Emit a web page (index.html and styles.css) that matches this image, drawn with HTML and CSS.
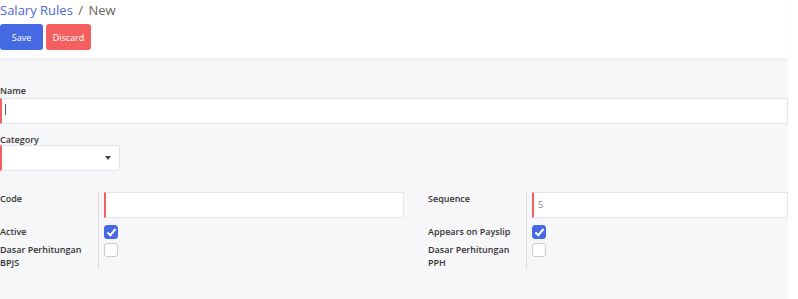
FILE: index.html
```html
<!DOCTYPE html>
<html lang="en">
<head>
    <meta charset="UTF-8">
    <title>Salary Rules / New</title>
    <link rel="stylesheet" href="styles.css">
</head>
<body>
    <div class="page">
        <!-- Header -->
        <div class="header">
            <div class="breadcrumb">
                <a class="crumb-link">Salary Rules</a>
                <span class="crumb-sep">/</span>
                <span class="crumb-current">New</span>
            </div>
            <div class="actions">
                <button class="btn btn-save">Save</button>
                <button class="btn btn-discard">Discard</button>
            </div>
        </div>

        <!-- Form -->
        <div class="sheet">
            <div class="field-block">
                <label class="top-label">Name</label>
                <div class="input required wide"><span class="caret"></span></div>
            </div>

            <div class="field-block">
                <label class="top-label">Category</label>
                <div class="input required select">
                    <span class="select-arrow"></span>
                </div>
            </div>

            <div class="groups">
                <div class="group group-left">
                    <div class="cell-label">Code</div>
                    <div class="cell-field"><div class="input required"></div></div>

                    <div class="cell-label short">Active</div>
                    <div class="cell-field"><span class="check checked"></span></div>

                    <div class="cell-label last">Dasar Perhitungan BPJS</div>
                    <div class="cell-field last"><span class="check"></span></div>
                </div>

                <div class="group group-right">
                    <div class="cell-label">Sequence</div>
                    <div class="cell-field"><div class="input required value">5</div></div>

                    <div class="cell-label short">Appears on Payslip</div>
                    <div class="cell-field"><span class="check checked"></span></div>

                    <div class="cell-label last">Dasar Perhitungan PPH</div>
                    <div class="cell-field last"><span class="check"></span></div>
                </div>
            </div>
        </div>
    </div>
</body>
</html>
```

FILE: styles.css
```css
/* General */
body {
    margin: 0;
    font-family: "Open Sans", Arial, sans-serif;
    background-color: #FFFFFF;
    color: #333333;
}

.page {
    width: 788px;
    height: 299px;
    background-color: #F7F7F9;
}

/* Header */
.header {
    background-color: #FFFFFF;
    height: 58px;
    box-shadow: 0 2px 4px rgba(0, 0, 0, 0.04);
    position: relative;
}

.breadcrumb {
    font-size: 13px;
    line-height: 20px;
}

.crumb-link {
    color: #4B68D8;
}

.crumb-sep {
    color: #666666;
    margin: 0 2px;
}

.crumb-current {
    color: #666666;
}

.actions {
    display: flex;
    gap: 3px;
    margin-top: 4px;
}

.btn {
    border: none;
    border-radius: 3px;
    color: #FFFFFF;
    font-family: "Open Sans", Arial, sans-serif;
    font-size: 9px;
    height: 26px;
    padding: 0;
    cursor: pointer;
}

.btn-save {
    background-color: #4569E3;
    width: 43px;
}

.btn-discard {
    background-color: #F45F5F;
    width: 45px;
}

/* Form */
.sheet {
    padding-top: 27px;
}

.top-label {
    display: block;
    font-size: 9px;
    font-weight: 600;
    color: #333333;
    line-height: 12px;
    margin-bottom: 1px;
}

.field-block {
    margin-bottom: 10px;
}

.field-block + .field-block .top-label {
    margin-top: 2px;
    margin-bottom: 0;
    line-height: 11px;
}

.input {
    background-color: #FFFFFF;
    border: 1px solid #E1E4EA;
    height: 24px;
    box-sizing: content-box;
    position: relative;
}

.input.required {
    border-left: 2px solid #F45F5F;
}

.caret {
    position: absolute;
    left: 3px;
    top: 5px;
    height: 11px;
    border-left: 1px solid #555555;
}

.input.select {
    width: 117px;
    border-radius: 0 3px 3px 0;
}

.select-arrow {
    position: absolute;
    right: 8px;
    top: 10px;
    border-left: 3px solid transparent;
    border-right: 3px solid transparent;
    border-top: 4px solid #444444;
}

.input.value {
    font-size: 9px;
    color: #888888;
    line-height: 24px;
    padding-left: 4px;
}

/* Two column groups */
.groups {
    display: flex;
    margin-top: 21px;
}

.group {
    display: grid;
    grid-template-columns: 99px 1fr;
    align-items: start;
}

.group-left {
    width: 404px;
}

.group-right {
    flex: 1;
    margin-left: 24px;
}

.cell-label {
    border-right: 1px solid #DDDDDD;
    font-size: 9px;
    font-weight: 600;
    color: #333333;
    line-height: 13px;
    padding-top: 0;
    height: 33px;
    box-sizing: border-box;
    align-self: stretch;
}

.cell-label.short {
    height: 18px;
}

.cell-label.last {
    height: auto;
    padding-right: 10px;
}

.cell-field {
    padding-left: 5px;
}

.check {
    display: block;
    width: 14px;
    height: 14px;
    box-sizing: border-box;
    border: 1px solid #CCCCCC;
    border-radius: 3px;
    background-color: #FFFFFF;
    position: relative;
}

.check.checked {
    background-color: #4569E3;
    border-color: #4569E3;
}

.check.checked::after {
    content: "";
    position: absolute;
    left: 4px;
    top: 1px;
    width: 3px;
    height: 7px;
    border-right: 2px solid #FFFFFF;
    border-bottom: 2px solid #FFFFFF;
    transform: rotate(40deg);
}
```
